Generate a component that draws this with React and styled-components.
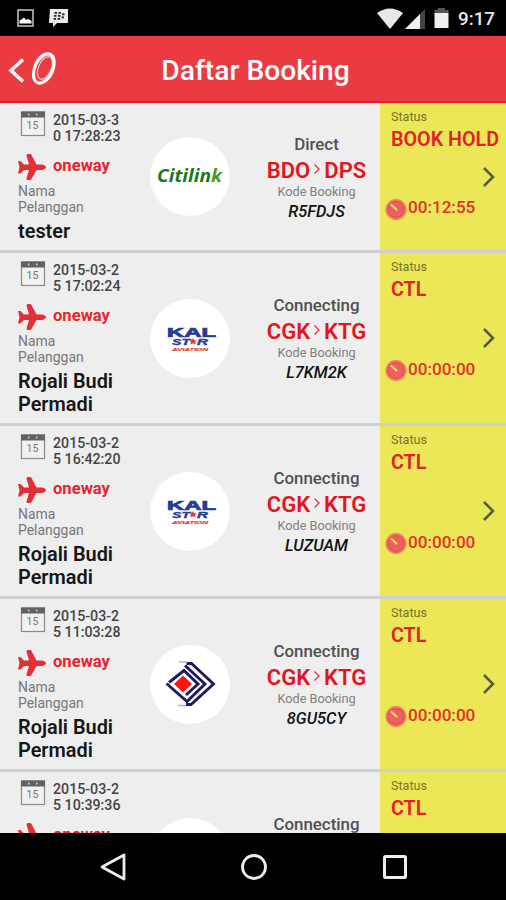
import React from 'react';
import styled, { createGlobalStyle } from 'styled-components';

const Global = createGlobalStyle`
  * { box-sizing: border-box; }
  body { margin: 0; background: #000; font-family: Roboto, sans-serif; }
`;

const Screen = styled.div`
  display: flex;
  flex-direction: column;
  width: 506px;
  height: 900px;
  overflow: hidden;
  background: #000;
`;

const StatusBar = styled.div`
  display: flex;
  flex: none;
  align-items: center;
  justify-content: space-between;
  height: 36px;
  padding: 0 11px 0 17px;
`;

const Notifications = styled.div`
  display: flex;
  align-items: center;
  gap: 15px;
`;

const Indicators = styled.div`
  display: flex;
  align-items: center;
`;

const Clock = styled.span`
  margin-left: 9px;
  padding-top: 2px;
  color: #e8e8e8;
  font-size: 18.8px;
  font-weight: 500;
`;

const Header = styled.header`
  display: grid;
  flex: none;
  grid-template-columns: 100px 1fr 95px;
  align-items: center;
  height: 67px;
  padding-bottom: 1px;
  border-bottom: 2px solid #e21f2a;
  background: #ea3a42;
`;

const BackButton = styled.div`
  display: flex;
  align-items: center;
  padding: 4px 0 0 8px;
`;

const Title = styled.h1`
  margin: 5px 0 0;
  color: #fff;
  font-size: 28.2px;
  font-weight: 500;
  line-height: 34px;
  text-align: center;
  white-space: nowrap;
`;

const List = styled.main`
  flex: 1;
  min-height: 0;
  overflow: hidden;
  background: #eee;
`;

const Row = styled.article`
  display: grid;
  grid-template-columns: 127px 126px 127px 126px;
  height: ${(p) => (p.$short ? 150 : 173)}px;
  border-bottom: 3px solid #cfcfcf;
`;

const Trip = styled.div`
  padding: 8px 0 0 18px;
`;

const DateLine = styled.div`
  display: flex;
  gap: 7px;
  padding-left: 2px;
`;

const DateText = styled.div`
  width: 70px;
  padding-top: 1px;
  color: #444;
  font-size: 14.2px;
  font-weight: 500;
  line-height: 16.4px;
  white-space: pre;
`;

const TypeLine = styled.div`
  display: flex;
  align-items: center;
  gap: 7px;
  height: 28px;
  margin-top: 8px;
  color: #e6252c;
  font-size: 16.6px;
  font-weight: 700;
  line-height: 20px;
`;

const TypeText = styled.span`
  padding-bottom: 1px;
`;

const Caption = styled.div`
  margin-top: 2px;
  width: 80px;
  color: #777;
  font-size: 13.95px;
  line-height: 16.4px;
`;

const Customer = styled.div`
  margin-top: 4px;
  color: #161616;
  font-size: 19.9px;
  font-weight: 600;
  line-height: 23px;
`;

const LogoCell = styled.div`
  display: flex;
  align-items: center;
  justify-content: center;
`;

const LogoDisc = styled.div`
  display: flex;
  align-items: center;
  justify-content: center;
  width: 80px;
  height: 79px;
  border-radius: 50%;
  background: #fff;
`;

const Flight = styled.div`
  display: flex;
  flex-direction: column;
  align-items: center;
  justify-content: center;
  padding-top: 3px;
`;

const FlightKind = styled.div`
  color: #505050;
  font-size: 16.9px;
  font-weight: 500;
  line-height: 20px;
`;

const Route = styled.div`
  display: flex;
  align-items: center;
  gap: 3px;
  margin-top: 4px;
  color: #e3151d;
  font-size: 22px;
  font-weight: 600;
  line-height: 26px;
`;

const CodeLabel = styled.div`
  color: #808080;
  font-size: 12.7px;
  line-height: 16px;
`;

const Code = styled.div`
  margin-top: 1px;
  color: #111;
  font-size: 16.4px;
  font-style: italic;
  font-weight: 500;
  line-height: 22px;
`;

const StatusCell = styled.div`
  display: grid;
  grid-template: 1fr / 1fr;
  background: #ece756;
`;

const StatusInfo = styled.div`
  grid-area: 1 / 1;
  padding: 6px 0 0 11px;
`;

const StatusLabel = styled.div`
  color: #77732f;
  font-size: 12.6px;
  line-height: 16px;
`;

const StatusValue = styled.div`
  margin-top: 3px;
  color: #e3212c;
  font-size: 19.7px;
  font-weight: 600;
  line-height: 24px;
  white-space: nowrap;
`;

const StatusActions = styled.div`
  display: grid;
  grid-area: 1 / 1;
  grid-template-rows: 24px 24px;
  align-self: center;
  row-gap: 8px;
  padding: 32px 11px 0 5px;
`;

const Arrow = styled.div`
  display: flex;
  align-items: center;
  justify-content: flex-end;
`;

const Timer = styled.div`
  display: flex;
  align-items: center;
  gap: 1px;
  color: #e2312f;
  font-size: 17.1px;
  font-weight: 500;
  line-height: 20px;
`;

const TimerText = styled.span`
  padding-bottom: 3px;
`;

const NavBar = styled.nav`
  display: flex;
  flex: none;
  align-items: center;
  justify-content: center;
  gap: 113px;
  height: 67px;
  padding-left: 1px;
`;

const PictureIcon = () => (
  <svg width="17" height="18" viewBox="0 0 17 18">
    <rect x="1" y="1" width="15" height="16" fill="none" stroke="#bbb" strokeWidth="1.600" />
    <path d="M2.500 14.500v-3l2-1 2.500-2 2 2.500 2-1 3.500 2v2.500z" fill="#fff" />
  </svg>
);

const MessageIcon = () => (
  <svg width="20" height="18" viewBox="0 0 20 18">
    <path d="M1 0h18v14H8l-4 4v-4H0z" fill="#ececec" />
    <path d="M5.500 3h2.500v1.800H5.500zM9.500 3h2.500v1.800H9.500zM5 6h2.500v1.800H5zM9 6h2.500v1.800H9zM13 4.500h2.500v1.800H13zM4.600 9h2.500v1.800H4.600zM8.600 9h2.500v1.800H8.600zM12.500 7.500h2.500v1.800h-2.500z" fill="#222" />
  </svg>
);

const WifiIcon = () => (
  <svg width="26" height="21" viewBox="0 0 26 21">
    <path d="M0 5Q13-4 26 5L13 21z" fill="#e8e8e8" />
  </svg>
);

const SignalIcon = () => (
  <svg width="31" height="21" viewBox="0 0 31 21">
    <path d="M22 1v20H2z" fill="#444" />
    <path d="M17 6v15H2z" fill="#f0f0f0" />
  </svg>
);

const BatteryIcon = () => (
  <svg width="15" height="22" viewBox="0 0 15 22">
    <path d="M4 1h7v2h3.500v3H.5V3H4z" fill="#555" />
    <path d="M.5 6h14v15H.5z" fill="#efefef" />
  </svg>
);

const BackIcon = () => (
  <svg width="52" height="40" viewBox="0 0 52 40">
    <path d="M15 9.500L3 20.500 15 31.500" fill="none" stroke="#fff" strokeWidth="3.600" />
    <g transform="rotate(24 36 18)" fill="none" stroke="#fff">
      <ellipse cx="36" cy="18.500" rx="9" ry="15.500" strokeWidth="3.200" />
      <ellipse cx="36.800" cy="17.500" rx="6.300" ry="12" strokeWidth="1.200" opacity=".7" />
    </g>
  </svg>
);

const CalendarText = styled.text`
  font: 10.500px Roboto, sans-serif;
  fill: #777;
`;

const CalendarIcon = () => (
  <svg width="26" height="26" viewBox="0 0 26 26">
    <rect x="1.500" y="1" width="23" height="23.500" fill="#f1f1f1" stroke="#8a8a8a" strokeWidth="1.200" />
    <path d="M1 .5h24v6H1z" fill="#626262" />
    <path d="M8 2.500h1.500v2H8zM16 2.500h1.500v2H16z" fill="#ccc" />
    <CalendarText x="12.500" y="18" textAnchor="middle">15</CalendarText>
  </svg>
);

const PlaneIcon = () => (
  <svg width="28" height="28" viewBox="0 0 28 28">
    <path d="M0 8h2.500L6 11.500h5L8.500 2.500Q8.500 1 10 1h2q1 0 1.500 1L18.500 11.500H24q4 1 4 2.700T24 17h-5.500L13.500 26q-.5 1-1.500 1h-2q-1.500 0-1.500-1.500L11 17H6l-3.500 3.500H0L1.500 14.200z" fill="#e42f36" />
  </svg>
);

const RouteArrow = () => (
  <svg width="8" height="16" viewBox="0 0 8 16">
    <path d="M1.500 1.500l4.500 4.500-4.500 4.500" fill="none" stroke="#e3353b" strokeWidth="1.300" />
  </svg>
);

const ChevronIcon = () => (
  <svg width="12" height="20" viewBox="0 0 12 20">
    <path d="M1 1l9 9-9 9" fill="none" stroke="#555a42" strokeWidth="2.500" />
  </svg>
);

const TimerIcon = () => (
  <svg width="22" height="24" viewBox="0 0 22 24">
    <circle cx="11" cy="12.500" r="10" fill="#e9635c" stroke="#ee8d62" strokeWidth="1.300" />
    <circle cx="11" cy="12.500" r="7.700" fill="none" stroke="#e5505a" strokeWidth="1" />
    <path d="M6.500 8l5 4.500" stroke="#f3cf73" strokeWidth="2.200" strokeLinecap="round" />
  </svg>
);

const CitilinkText = styled.text`
  font: italic 700 18px 'Open Sans', sans-serif;
  fill: #18781d;
`;

const KalText = styled.text`
  font: ${(p) => (p.$slanted ? 'italic ' : '')}700 ${(p) => p.$size}px 'Liberation Sans', sans-serif;
  fill: ${(p) => p.$color};
  stroke: ${(p) => p.$color};
  stroke-width: ${(p) => p.$outline || 0}px;
`;

const Citilink = () => (
  <svg width="70" height="30" viewBox="0 0 70 30">
    <CitilinkText x="2" y="20" textLength="65" lengthAdjust="spacingAndGlyphs">
      Citilin<tspan fill="#4c9a20">k</tspan>
    </CitilinkText>
  </svg>
);

const KalStar = () => (
  <svg width="54" height="30" viewBox="0 0 54 30">
    <KalText $size={12.2} $outline={0.7} $color="#263d96" x="4" y="14" textLength="49" lengthAdjust="spacingAndGlyphs">KAL</KalText>
    <KalText $size={8.8} $outline={0.4} $color="#263d96" $slanted x="9" y="22" textLength="18" lengthAdjust="spacingAndGlyphs">ST</KalText>
    <path d="M30 15l1.200 2.300h2.600L32 19l.8 2.500L30 20.200l-2.600 1.300L28 19l-2-1.700h2.700z" fill="#e5392d" />
    <KalText $size={8.8} $outline={0.4} $color="#263d96" $slanted x="34" y="22" textLength="11" lengthAdjust="spacingAndGlyphs">R</KalText>
    <KalText $size={3.6} $outline={0.2} $color="#dc4a35" $slanted x="9" y="27.500" textLength="36" lengthAdjust="spacingAndGlyphs">AVIATION</KalText>
  </svg>
);

const Sriwijaya = () => (
  <svg width="54" height="48" viewBox="0 0 54 48">
    <path d="M11 24l9-8.500 9 8.500-9 8.500z" fill="#fb1512" />
    <g fill="none" stroke="#1c1c5e" strokeWidth="2.900">
      <path d="M6 22.500L21 10.500 35 24 23 35" />
      <path d="M22 5.500L42 24 24 41.500 3.500 23.500" />
      <path d="M23.500 3.500h5L50.500 24 28 44.500h-5" />
    </g>
    <path d="M16 2h8M15 45.500h8" stroke="#b9b9c8" strokeWidth="1.500" />
  </svg>
);

const BackNavIcon = () => (
  <svg width="28" height="28" viewBox="0 0 28 28">
    <path d="M25 2v24L3 14z" fill="none" stroke="#eee" strokeWidth="2.800" strokeLinejoin="round" />
  </svg>
);

const HomeNavIcon = () => (
  <svg width="28" height="28" viewBox="0 0 28 28">
    <circle cx="14" cy="14" r="11.500" fill="none" stroke="#eee" strokeWidth="2.800" />
  </svg>
);

const RecentNavIcon = () => (
  <svg width="28" height="28" viewBox="0 0 28 28">
    <rect x="3.500" y="3.500" width="21" height="21" rx="1" fill="none" stroke="#eee" strokeWidth="3" />
  </svg>
);

const logos = { citilink: Citilink, kalstar: KalStar, sriwijaya: Sriwijaya };

const bookings = [
  { date: '2015-03-3\n0 17:28:23', name: 'tester', short: true, logo: 'citilink', kind: 'Direct', from: 'BDO', to: 'DPS', code: 'R5FDJS', status: 'BOOK HOLD', time: '00:12:55' },
  { date: '2015-03-2\n5 17:02:24', name: 'Rojali Budi Permadi', logo: 'kalstar', kind: 'Connecting', from: 'CGK', to: 'KTG', code: 'L7KM2K', status: 'CTL', time: '00:00:00' },
  { date: '2015-03-2\n5 16:42:20', name: 'Rojali Budi Permadi', logo: 'kalstar', kind: 'Connecting', from: 'CGK', to: 'KTG', code: 'LUZUAM', status: 'CTL', time: '00:00:00' },
  { date: '2015-03-2\n5 11:03:28', name: 'Rojali Budi Permadi', logo: 'sriwijaya', kind: 'Connecting', from: 'CGK', to: 'KTG', code: '8GU5CY', status: 'CTL', time: '00:00:00' },
  { date: '2015-03-2\n5 10:39:36', name: 'Rojali Budi Permadi', kind: 'Connecting', from: 'CGK', to: 'KTG', code: '', status: 'CTL', time: '00:00:00' },
];

function Booking({ item }) {
  const Logo = logos[item.logo];
  return (
    <Row $short={item.short}>
      <Trip>
        <DateLine><CalendarIcon /><DateText>{item.date}</DateText></DateLine>
        <TypeLine><PlaneIcon /><TypeText>oneway</TypeText></TypeLine>
        <Caption>Nama Pelanggan</Caption>
        <Customer>{item.name}</Customer>
      </Trip>
      <LogoCell><LogoDisc>{Logo && <Logo />}</LogoDisc></LogoCell>
      <Flight>
        <FlightKind>{item.kind}</FlightKind>
        <Route>{item.from}<RouteArrow />{item.to}</Route>
        <CodeLabel>Kode Booking</CodeLabel>
        <Code>{item.code || '\u00a0'}</Code>
      </Flight>
      <StatusCell>
        <StatusInfo>
          <StatusLabel>Status</StatusLabel>
          <StatusValue>{item.status}</StatusValue>
        </StatusInfo>
        <StatusActions>
          <Arrow><ChevronIcon /></Arrow>
          <Timer><TimerIcon /><TimerText>{item.time}</TimerText></Timer>
        </StatusActions>
      </StatusCell>
    </Row>
  );
}

export default function App() {
  return (
    <Screen>
      <Global />
      <StatusBar>
        <Notifications><PictureIcon /><MessageIcon /></Notifications>
        <Indicators><WifiIcon /><SignalIcon /><BatteryIcon /><Clock>9:17</Clock></Indicators>
      </StatusBar>
      <Header>
        <BackButton><BackIcon /></BackButton>
        <Title>Daftar Booking</Title>
      </Header>
      <List>{bookings.map((item) => <Booking key={item.date} item={item} />)}</List>
      <NavBar><BackNavIcon /><HomeNavIcon /><RecentNavIcon /></NavBar>
    </Screen>
  );
}
